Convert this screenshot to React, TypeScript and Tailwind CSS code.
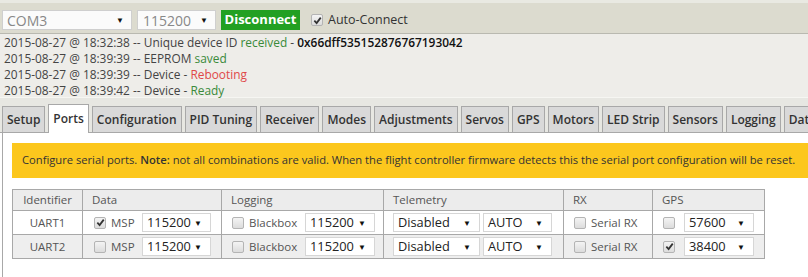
import React from "react";

const font = { fontFamily: '"Open Sans", "Noto Sans", sans-serif' };

const Check = ({ on }: { on?: boolean }) => (
  <span className="inline-flex h-[12px] w-[12px] shrink-0 items-center justify-center rounded-[2px] border border-[#b4b4b4] bg-gradient-to-b from-[#f4f4f4] to-[#dcdcdc]">
    {on && (
      <svg width="9" height="9" viewBox="0 0 10 10">
        <path d="M1.5 5.2 L4 7.8 L8.6 1.8" stroke="#333" strokeWidth="2" fill="none" />
      </svg>
    )}
  </span>
);

const Select = ({ value, w, cls = "" }: { value: string; w: string; cls?: string }) => (
  <div className={`flex h-[19px] items-center justify-between border border-[#d6d6d6] bg-white pl-[4px] pr-[8px] text-[12.8px] leading-none text-[#222] ${w} ${cls}`}>
    <span>{value}</span>
    <span className="text-[8px] text-[#111]">▼</span>
  </div>
);

const tabs = ["Setup", "Ports", "Configuration", "PID Tuning", "Receiver", "Modes", "Adjustments", "Servos", "GPS", "Motors", "LED Strip", "Sensors", "Logging", "Data Flash"];

const rows = [
  { id: "UART1", msp: true, gps: false, gpsBaud: "57600", bg: "bg-white" },
  { id: "UART2", msp: false, gps: true, gpsBaud: "38400", bg: "bg-[#eeeeee]" },
];

export default function App() {
  return (
    <div className="h-[277px] w-[808px] overflow-hidden bg-white" style={font}>
      {/* top bar */}
      <div className="flex h-[34px] items-start gap-[5px] border-t-[3px] border-b border-t-[#e9e9e2] border-b-[#b9b9b0] bg-[#dcdbcf] pl-[2px] pt-[7px]">
        <div className="flex h-[20px] w-[130px] items-center justify-between border border-[#cfcfcf] bg-[#fbfbfb] pl-[4px] pr-[7px] text-[14px] text-[#888]">
          <span>COM3</span>
          <span className="text-[8px] text-[#111]">▼</span>
        </div>
        <div className="flex h-[20px] w-[79px] items-center justify-between border border-[#cfcfcf] bg-[#fbfbfb] pl-[5px] pr-[7px] text-[14px] text-[#888]">
          <span>115200</span>
          <span className="text-[8px] text-[#111]">▼</span>
        </div>
        <div className="flex h-[20px] w-[79px] items-center justify-center bg-[#22a022] text-[13px] font-bold text-white">Disconnect</div>
        <div className="ml-[6px] flex h-[20px] items-center gap-[5px] text-[12.5px] text-[#333]">
          <Check on />
          <span>Auto-Connect</span>
        </div>
      </div>

      {/* log */}
      <div className="h-[64px] border-b border-[#f6f6f2] bg-[#eeede9] pl-[4px] text-[11.9px] leading-[16px] text-[#444]">
        <div>
          2015-08-27 @ 18:32:38 -- Unique device ID <span className="text-[#3a8a3a]">received</span> -{" "}
          <span className="font-semibold text-[#111]">0x66dff535152876767193042</span>
        </div>
        <div>
          2015-08-27 @ 18:39:39 -- EEPROM <span className="text-[#3a8a3a]">saved</span>
        </div>
        <div>
          2015-08-27 @ 18:39:39 -- Device - <span className="text-[#e04848]">Rebooting</span>
        </div>
        <div>
          2015-08-27 @ 18:39:42 -- Device - <span className="text-[#3a8a3a]">Ready</span>
        </div>
      </div>

      {/* tabs */}
      <div className="flex h-[35px] items-end gap-[3px] border-b border-[#a8a8a8] bg-[#e7e7e2] pl-[2px]">
        {tabs.map((t) =>
          t === "Ports" ? (
            <div key={t} className="-mb-px flex h-[29px] shrink-0 items-center border border-b-0 border-[#a8a8a8] bg-white px-[4px] text-[12px] font-semibold text-[#333]">
              {t}
            </div>
          ) : (
            <div key={t} className="flex h-[26px] shrink-0 items-center border border-b-0 border-[#a8a8a8] bg-[#d9d9d9] px-[4px] text-[12px] font-semibold text-[#333]">
              {t}
            </div>
          )
        )}
      </div>

      {/* content */}
      <div className="ml-[2px] h-[200px] border-l border-[#a8a8a8] bg-white pl-[9px] pt-[10px]">
        <div className="flex h-[35px] items-center whitespace-nowrap bg-[#fcc71d] pl-[10px] text-[11.2px] text-[#333]">
          Configure serial ports.&nbsp;<span className="font-semibold">Note:</span>&nbsp;not all combinations are valid. When the flight controller firmware detects this the serial port configuration will be reset.
        </div>

        <table className="mt-[11px] border-collapse text-[11.5px] text-[#555]">
          <thead>
            <tr className="h-[21px] bg-[#ececec]">
              <th className="w-[70px] border border-[#a8a8a8] text-center font-normal">Identifier</th>
              <th className="w-[139px] border border-[#a8a8a8] pl-[9px] text-left font-normal">Data</th>
              <th className="w-[162px] border border-[#a8a8a8] pl-[9px] text-left font-normal">Logging</th>
              <th className="w-[180px] border border-[#a8a8a8] pl-[9px] text-left font-normal">Telemetry</th>
              <th className="w-[89px] border border-[#a8a8a8] pl-[9px] text-left font-normal">RX</th>
              <th className="w-[112px] border border-[#a8a8a8] pl-[9px] text-left font-normal">GPS</th>
            </tr>
          </thead>
          <tbody>
            {rows.map((r) => (
              <tr key={r.id} className={`h-[24px] ${r.bg}`}>
                <td className="border border-[#a8a8a8] text-center">{r.id}</td>
                <td className="border border-[#a8a8a8] pl-[11px]">
                  <div className="flex items-center">
                    <Check on={r.msp} />
                    <span className="ml-[5px] w-[31px]">MSP</span>
                    <Select value="115200" w="w-[69px]" />
                  </div>
                </td>
                <td className="border border-[#a8a8a8] pl-[10px]">
                  <div className="flex items-center">
                    <Check />
                    <span className="ml-[5px] w-[56px]">Blackbox</span>
                    <Select value="115200" w="w-[70px]" />
                  </div>
                </td>
                <td className="border border-[#a8a8a8] pl-[9px]">
                  <div className="flex items-center gap-[3px]">
                    <Select value="Disabled" w="w-[87px]" />
                    <Select value="AUTO" w="w-[69px]" />
                  </div>
                </td>
                <td className="border border-[#a8a8a8] pl-[10px]">
                  <div className="flex items-center gap-[5px]">
                    <Check />
                    <span>Serial RX</span>
                  </div>
                </td>
                <td className="border border-[#a8a8a8] pl-[10px]">
                  <div className="flex items-center">
                    <Check on={r.gps} />
                    <Select value={r.gpsBaud} w="w-[70px]" cls="ml-[9px]" />
                  </div>
                </td>
              </tr>
            ))}
          </tbody>
        </table>
      </div>
    </div>
  );
}
